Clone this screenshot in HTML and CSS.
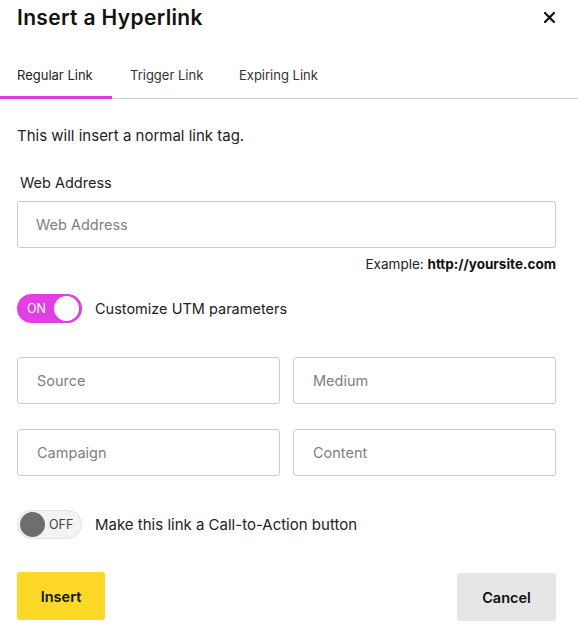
FILE: index.html
```html
<!DOCTYPE html>
<html>
<head>
<meta charset="utf-8">
<link rel="stylesheet" href="styles.css">
</head>
<body>
<div class="modal">
  <div class="header">
    <h1 class="title">Insert a Hyperlink</h1>
    <button class="close" aria-label="Close">
      <svg width="11" height="11" viewBox="0 0 11 11"><path d="M1 1L10 10M10 1L1 10" stroke="#111" stroke-width="2.2" stroke-linecap="square"/></svg>
    </button>
  </div>
  <div class="tabs">
    <div class="tab active">Regular Link</div>
    <div class="tab">Trigger Link</div>
    <div class="tab">Expiring Link</div>
  </div>
  <div class="body">
    <p class="intro">This will insert a normal link tag.</p>
    <label class="label">Web Address</label>
    <input class="input" type="text" placeholder="Web Address">
    <div class="hint">Example: <b>http://yoursite.com</b></div>
    <div class="toggle-row utm">
      <div class="toggle on"><span class="toggle-text">ON</span><span class="knob"></span></div>
      <span class="toggle-label">Customize UTM parameters</span>
    </div>
    <div class="grid">
      <input class="input" type="text" placeholder="Source">
      <input class="input" type="text" placeholder="Medium">
      <input class="input" type="text" placeholder="Campaign">
      <input class="input" type="text" placeholder="Content">
    </div>
    <div class="toggle-row cta">
      <div class="toggle off"><span class="knob"></span><span class="toggle-text">OFF</span></div>
      <span class="toggle-label wide">Make this link a Call-to-Action button</span>
    </div>
    <div class="actions">
      <button class="btn insert">Insert</button>
      <button class="btn cancel">Cancel</button>
    </div>
  </div>
</div>
</body>
</html>
```
FILE: styles.css
```css
* { box-sizing: border-box; }
body {
  margin: 0;
  background: #fff;
  font-family: Inter, Lato, sans-serif;
  color: #222;
}
.modal { width: 578px; }
.header {
  display: flex;
  justify-content: space-between;
  align-items: center;
  height: 35px;
  padding: 0 23px 0 17px;
}
.title {
  margin: 0;
  font-size: 21px;
  font-weight: 600;
  letter-spacing: 0.35px;
  color: #111;
}
.close {
  border: 0;
  background: none;
  padding: 0;
  display: flex;
  cursor: pointer;
}
.tabs {
  display: flex;
  margin-top: 26px;
  border-bottom: 1px solid #cfcfcf;
  height: 38px;
}
.tab {
  font-size: 13px;
  color: #333;
  padding: 6px 0 0;
  height: 38px;
}
.tab:nth-child(1) { width: 112px; padding-left: 17px; }
.tab:nth-child(2) { width: 127px; padding-left: 18px; }
.tab:nth-child(3) { padding-left: 0; }
.tab.active {
  border-bottom: 3px solid #dd3ddd;
  color: #222;
}
.body {
  padding: 0 22px 0 17px;
}
.intro {
  margin: 27px 0 0;
  font-size: 15px;
  color: #222;
}
.label {
  display: block;
  margin: 29px 0 0 3px;
  font-size: 14.5px;
  color: #222;
}
.input {
  display: block;
  width: 100%;
  height: 47px;
  border: 1px solid #cccccc;
  border-radius: 3px;
  padding: 0 18px;
  font-family: Inter, Lato, sans-serif;
  font-size: 14.5px;
  color: #222;
  outline: none;
  background: #fff;
}
.body > .input { margin-top: 10px; }
.input::placeholder { color: #808080; }
.hint {
  text-align: right;
  font-size: 13.5px;
  color: #222;
  margin-top: 8px;
}
.hint b { font-weight: 700; color: #111; }
.toggle-row {
  display: flex;
  align-items: center;
  gap: 13px;
}
.utm { margin-top: 22px; }
.toggle {
  width: 65px;
  height: 29px;
  border-radius: 15px;
  display: flex;
  align-items: center;
  padding: 0 3px;
}
.toggle.on {
  background: #e33ee3;
  justify-content: space-between;
  padding-left: 10px;
}
.toggle.on .toggle-text { color: #fff; font-size: 12.5px; }
.toggle.on .knob {
  width: 25px;
  height: 25px;
  border-radius: 50%;
  background: #fff;
}
.toggle.off {
  background: #f3f3f3;
  border: 1px solid #e2e2e2;
  padding-left: 2px;
  gap: 4px;
}
.toggle.off .knob {
  width: 25px;
  height: 25px;
  border-radius: 50%;
  background: #6e6e6e;
}
.toggle.off .toggle-text { color: #444; font-size: 12.5px; }
.toggle-label { font-size: 14.5px; color: #222; }
.toggle-label.wide { font-size: 15px; }
.grid {
  display: grid;
  grid-template-columns: 1fr 1fr;
  column-gap: 13px;
  row-gap: 25px;
  margin-top: 34px;
}
.grid .input { padding: 0 19px; }
.cta { margin-top: 34px; }
.actions {
  display: flex;
  justify-content: space-between;
  margin-top: 33px;
}
.btn {
  border: 0;
  border-radius: 3px;
  height: 48px;
  font-family: Inter, Lato, sans-serif;
  font-size: 14.5px;
  font-weight: 600;
  color: #111;
  cursor: pointer;
}
.insert { width: 88px; background: #fdd826; }
.cancel { width: 99px; background: #e6e6e6; margin-top: 1px; }
```
